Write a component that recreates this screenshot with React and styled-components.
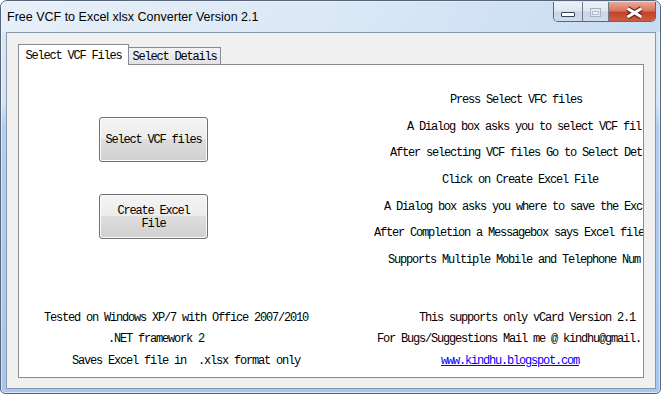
import React from 'react';
import styled, { createGlobalStyle, css } from 'styled-components';

const Global = createGlobalStyle`
  body {
    margin: 0;
    background: #fff;
  }
`;

const Window = styled.div`
  width: 661px;
  height: 394px;
  box-sizing: border-box;
  border: 1px solid #56657a;
  border-radius: 7px 7px 5px 5px;
  background: linear-gradient(180deg, #dce8f5 0, #d5e4f4 100px, #b3cfee 125px, #a6c6eb 100%);
  box-shadow: inset 0 0 0 1px rgba(255, 255, 255, 0.55);
  display: flex;
  flex-direction: column;
  overflow: hidden;
`;

const TitleBar = styled.div`
  height: 31px;
  flex: none;
  display: flex;
  align-items: flex-start;
  padding-left: 6px;
  background: linear-gradient(90deg, rgba(236, 243, 250, 0.7) 0%, rgba(220, 233, 247, 0.3) 50%, rgba(186, 212, 242, 0.6) 100%);
`;

const Title = styled.span`
  font: 12.5px "Liberation Sans", Arial, sans-serif;
  line-height: 31px;
  padding-top: 1px;
  color: #000;
`;

const CaptionGroup = styled.div`
  margin: 1px 4px 0 auto;
  height: 20px;
  box-sizing: border-box;
  display: flex;
  border: 1px solid #57677e;
  border-top: none;
  border-radius: 0 0 5px 5px;
  overflow: hidden;
`;

const CaptionButton = styled.div`
  width: ${p => p.$w}px;
  height: 19px;
  display: flex;
  border-right: ${p => (p.$last ? 'none' : '1px solid #6b7a90')};
  background: ${p =>
    p.$close
      ? 'linear-gradient(180deg, #e9a996 0%, #d87660 45%, #c4432c 55%, #cf5c40 100%)'
      : 'linear-gradient(180deg, #eef2f7 0%, #dfe7f0 45%, #cad6e4 55%, #d2dcea 100%)'};
`;

const Client = styled.div`
  flex: 1;
  margin: 0 4px 4px 5px;
  border: 1px solid #8a98aa;
  background: #f0f0f0;
  padding: 11px 11px 10px;
  display: flex;
  flex-direction: column;
  min-height: 0;
`;

const TabStrip = styled.div`
  height: 20px;
  flex: none;
  display: flex;
  align-items: flex-end;
  position: relative;
  z-index: 1;
`;

const Tab = styled.div`
  box-sizing: border-box;
  border: 1px solid #898c95;
  border-bottom: none;
  display: flex;
  align-items: center;
  justify-content: center;
  font: 12px/12px "Liberation Mono", monospace;
  letter-spacing: -1.2px;
  color: #000;
  ${p =>
    p.$active
      ? css`
          width: 111px;
          height: 21px;
          margin-bottom: -1px;
          padding-top: 1px;
          background: #fff;
        `
      : css`
          width: 92px;
          height: 17px;
          padding-top: 2px;
          border-left: none;
          background: linear-gradient(180deg, #f3f3f3, #e2e2e2);
        `}
`;

const Panel = styled.div`
  flex: 1;
  background: #fff;
  border: 1px solid #898c95;
  overflow: hidden;
  display: flex;
  flex-direction: column;
  font: 12px "Liberation Mono", monospace;
  letter-spacing: -1.2px;
  white-space: pre;
  color: #000;
`;

const TopSection = styled.div`
  display: flex;
  padding-top: 28px;
`;

const LeftColumn = styled.div`
  width: 351px;
  flex: none;
  box-sizing: border-box;
  padding: 24px 0 0 80px;
  display: flex;
  flex-direction: column;
  gap: 32px;
`;

const RightColumn = styled.div`
  flex: 1;
  min-width: 0;
  display: flex;
  flex-direction: column;
  gap: 14.67px;
`;

const Line = styled.div`
  height: 12px;
  line-height: 14px;
  padding-left: ${p => p.$indent}px;
`;

const Button = styled.button`
  width: 109px;
  height: ${p => p.$h}px;
  padding: 2px 0 0;
  box-sizing: border-box;
  border: 1px solid #707070;
  border-radius: 3px;
  background: linear-gradient(180deg, #f4f4f4 0%, #ececec 50%, #dedede 50%, #d0d0d0 100%);
  box-shadow: inset 0 0 0 1px #fbfbfb;
  font: inherit;
  letter-spacing: inherit;
  line-height: 13px;
  white-space: normal;
  color: #000;
  text-align: center;
`;

const BottomSection = styled.div`
  margin-top: 45.7px;
  display: grid;
  grid-template-columns: 351px 1fr;
  row-gap: 9.7px;
`;

const Link = styled.a`
  color: #0000ff;
  text-decoration: underline;
`;

const MinIcon = () => (
  <svg width="28" height="19" viewBox="0 0 28 19">
    <rect x="7.5" y="10.5" width="13" height="4" rx="0.5" fill="#fff" stroke="#33435a" />
  </svg>
);

const MaxIcon = () => (
  <svg width="25" height="19" viewBox="0 0 25 19">
    <rect x="7.5" y="6.5" width="10" height="8" fill="#e3e9f1" stroke="#a3b2c6" />
    <rect x="9.5" y="9.5" width="6" height="3" fill="#eef2f7" stroke="#b3c0d1" />
  </svg>
);

const CloseIcon = () => (
  <svg width="46" height="19" viewBox="0 0 46 19">
    <path d="M18.5 6.5 L32.5 15 M32.5 6.5 L18.5 15" stroke="#5e2418" strokeWidth="5" />
    <path d="M18.5 6.5 L32.5 15 M32.5 6.5 L18.5 15" stroke="#fff" strokeWidth="3" />
  </svg>
);

// the labels are wider than the tab page; only the visible part is kept
const steps = [
  { indent: 80, text: 'Press Select VFC files' },
  { indent: 37, text: 'A Dialog box asks you to select VCF fil' },
  { indent: 20, text: 'After selecting VCF files Go to Select Det' },
  { indent: 72, text: 'Click on Create Excel File' },
  { indent: 14, text: 'A Dialog box asks you where to save the Exc' },
  { indent: 4, text: 'After Completion a Messagebox says Excel file' },
  { indent: 18, text: 'Supports Multiple Mobile and Telephone Num' },
];

const App = () => {
  return (
    <>
      <Global />
      <Window>
        <TitleBar>
          <Title>Free VCF to Excel xlsx Converter Version 2.1</Title>
          <CaptionGroup>
            <CaptionButton $w={28}><MinIcon /></CaptionButton>
            <CaptionButton $w={25}><MaxIcon /></CaptionButton>
            <CaptionButton $w={46} $close $last><CloseIcon /></CaptionButton>
          </CaptionGroup>
        </TitleBar>
        <Client>
          <TabStrip>
            <Tab $active>Select VCF Files</Tab>
            <Tab>Select Details</Tab>
          </TabStrip>
          <Panel>
            <TopSection>
              <LeftColumn>
                <Button $h={45}>Select VCF files</Button>
                <Button $h={45}>Create Excel<br />File</Button>
              </LeftColumn>
              <RightColumn>
                {steps.map(s => (
                  <Line key={s.text} $indent={s.indent}>{s.text}</Line>
                ))}
              </RightColumn>
            </TopSection>
            <BottomSection>
              <Line $indent={25}>Tested on Windows XP/7 with Office 2007/2010</Line>
              <Line $indent={49}>This supports only vCard Version 2.1</Line>
              <Line $indent={89}>.NET framework 2</Line>
              <Line $indent={7}>For Bugs/Suggestions Mail me @ kindhu@gmail.</Line>
              <Line $indent={53}>Saves Excel file in  .xlsx format only</Line>
              <Line $indent={71}><Link href="#">www.kindhu.blogspot.com</Link></Line>
            </BottomSection>
          </Panel>
        </Client>
      </Window>
    </>
  );
};

export default App;
